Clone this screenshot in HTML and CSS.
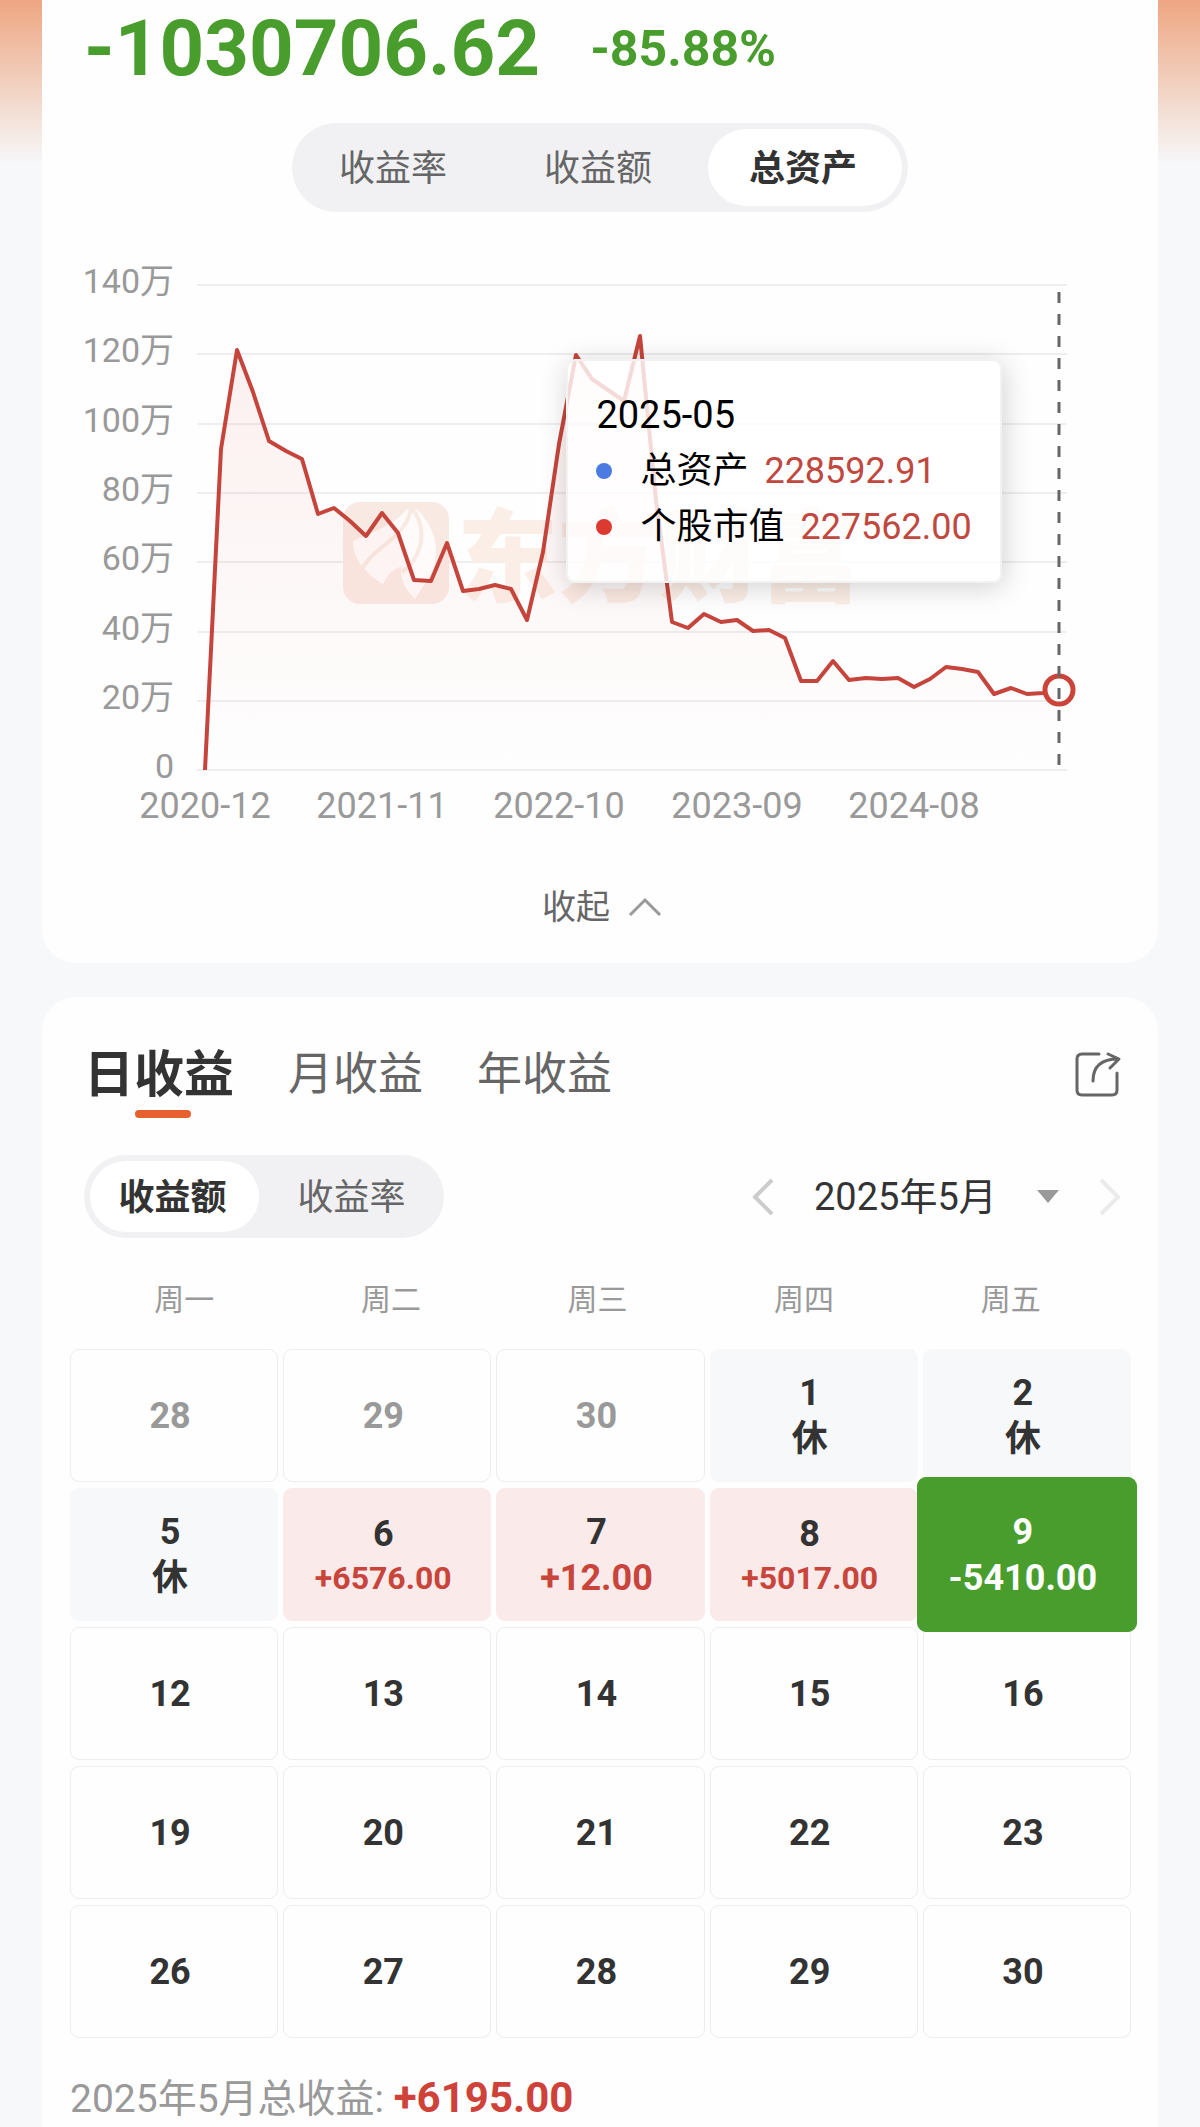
FILE: index.html
```html
<!DOCTYPE html>
<html lang="zh-CN">
  <head>
    <meta charset="UTF-8" />
    <meta name="viewport" content="width=device-width, initial-scale=1.0" />
    <title>收益日历</title>
    <link rel="stylesheet" href="styles.css" />
  </head>
  <body>
    <main>
      <section class="card assets">
        <div class="total">
          <span class="amount">-1030706.62</span>
          <span class="percent">-85.88%</span>
        </div>

        <div class="switch switch-large">
          <button>收益率</button>
          <button>收益额</button>
          <button class="active">总资产</button>
        </div>

        <div class="chart">
          <svg viewBox="0 0 1116 590" role="img" aria-label="总资产">
            <defs>
              <linearGradient id="area" x1="0" y1="0" x2="0" y2="1">
                <stop offset="0" stop-color="#e0463c" stop-opacity="0.08" />
                <stop offset="1" stop-color="#e0463c" stop-opacity="0" />
              </linearGradient>
            </defs>

            <path class="grid" d="M155 35H1025M155 104H1025M155 174H1025M155 243H1025M155 312H1025M155 382H1025M155 451H1025M155 520H1025" />

            <!-- watermark -->
            <g class="watermark">
              <rect x="301" y="252" width="106" height="102" rx="17" />
              <path class="feather" d="M311 291C325 284 352 276 365 259L371 264L375 259C390 275 397 292 393 311C390 327 383 332 373 349C365 340 358 333 359 317C349 319 344 328 341 334C326 325 310 310 311 291Z" />
              <path class="vein" d="M368 261C364 289 325 299 317 326M373 262C387 286 376 311 360 322" />
              <text x="415" y="344">东方财富</text>
            </g>

            <polygon fill="url(#area)" points="163,520 179,199 195,100 211,142 227,191 244,201 260,209 276,264 292,258 308,271 324,286 340,263 356,283 372,330 389,331 405,293 421,341 437,339 453,335 469,339 485,370 501,302 517,194 534,105 550,129 566,140 582,151 598,86 614,250 630,372 646,378 662,364 679,372 695,370 711,381 727,380 743,388 759,431 775,431 791,411 807,430 824,428 840,429 856,428 872,437 888,429 904,417 920,419 936,422 952,444 969,438 985,444 1001,443 1017,440 1017,520" />
            <polyline class="line" points="163,520 179,199 195,100 211,142 227,191 244,201 260,209 276,264 292,258 308,271 324,286 340,263 356,283 372,330 389,331 405,293 421,341 437,339 453,335 469,339 485,370 501,302 517,194 534,105 550,129 566,140 582,151 598,86 614,250 630,372 646,378 662,364 679,372 695,370 711,381 727,380 743,388 759,431 775,431 791,411 807,430 824,428 840,429 856,428 872,437 888,429 904,417 920,419 936,422 952,444 969,438 985,444 1001,443 1017,440" />
            <circle class="point" cx="1017" cy="440" r="14" />
            <path class="pointer" d="M1017 42V520" />

            <g class="axis axis-y">
              <text x="132" y="43">140万</text>
              <text x="132" y="112">120万</text>
              <text x="132" y="182">100万</text>
              <text x="132" y="251">80万</text>
              <text x="132" y="320">60万</text>
              <text x="132" y="390">40万</text>
              <text x="132" y="459">20万</text>
              <text x="132" y="528">0</text>
            </g>
            <g class="axis axis-x">
              <text x="163" y="568">2020-12</text>
              <text x="340" y="568">2021-11</text>
              <text x="517" y="568">2022-10</text>
              <text x="695" y="568">2023-09</text>
              <text x="872" y="568">2024-08</text>
            </g>
          </svg>

          <div class="tooltip">
            <p class="tooltip-date">2025-05</p>
            <p><i class="dot blue"></i>总资产<span>228592.91</span></p>
            <p><i class="dot red"></i>个股市值<span>227562.00</span></p>
          </div>
        </div>

        <button class="collapse">
          收起
          <svg width="34" height="20" viewBox="0 0 34 20"><path d="M2 18L17 3L32 18" /></svg>
        </button>
      </section>

      <section class="card calendar">
        <header class="tabs">
          <button class="active">日收益</button>
          <button>月收益</button>
          <button>年收益</button>
          <button class="share" aria-label="分享">
            <svg width="46" height="46" viewBox="0 0 46 46">
              <path d="M24 2H7Q2 2 2 7V38Q2 43 7 43H37Q42 43 42 38V21" />
              <path d="M18 29C18 15 26 7 43 7M33 2L44 7L35 16" />
            </svg>
          </button>
        </header>

        <div class="toolbar">
          <div class="switch">
            <button class="active">收益额</button>
            <button>收益率</button>
          </div>
          <div class="month">
            <button aria-label="上个月">
              <svg width="22" height="38" viewBox="0 0 22 38"><path d="M20 2L3 19L20 36" /></svg>
            </button>
            <label class="month-select">
              <select aria-label="月份">
                <option>2025年5月</option>
              </select>
              <svg width="22" height="13" viewBox="0 0 22 13"><path d="M0 0H22L11 13Z" /></svg>
            </label>
            <button aria-label="下个月" class="disabled" disabled>
              <svg width="22" height="38" viewBox="0 0 22 38"><path d="M2 2L19 19L2 36" /></svg>
            </button>
          </div>
        </div>

        <table>
          <thead>
            <tr>
              <th>周一</th>
              <th>周二</th>
              <th>周三</th>
              <th>周四</th>
              <th>周五</th>
            </tr>
          </thead>
          <tbody>
            <tr>
              <td class="other">28</td>
              <td class="other">29</td>
              <td class="other">30</td>
              <td class="rest">1<span>休</span></td>
              <td class="rest">2<span>休</span></td>
            </tr>
            <tr>
              <td class="rest">5<span>休</span></td>
              <td class="up">6<span class="small">+6576.00</span></td>
              <td class="up">7<span>+12.00</span></td>
              <td class="up">8<span class="small">+5017.00</span></td>
              <td class="selected">9<span>-5410.00</span></td>
            </tr>
            <tr>
              <td>12</td>
              <td>13</td>
              <td>14</td>
              <td>15</td>
              <td>16</td>
            </tr>
            <tr>
              <td>19</td>
              <td>20</td>
              <td>21</td>
              <td>22</td>
              <td>23</td>
            </tr>
            <tr>
              <td>26</td>
              <td>27</td>
              <td>28</td>
              <td>29</td>
              <td>30</td>
            </tr>
          </tbody>
        </table>

        <p class="summary">2025年5月总收益: <strong>+6195.00</strong></p>
      </section>
    </main>
  </body>
</html>
```
FILE: styles.css
```css
* {
  box-sizing: border-box;
}

body {
  margin: 0;
  background: #f6f8fa linear-gradient(#eea682, #f6f8fa) no-repeat top / 100% 164px;
  font-family: Roboto, "Noto Sans CJK SC", sans-serif;
  font-size: 36px;
  color: #333;
}

main {
  display: flex;
  flex-direction: column;
  gap: 34px;
  padding: 0 42px;
}

p {
  margin: 0;
}

button,
select {
  border: none;
  padding: 0;
  background: none;
  font: inherit;
  color: inherit;
  cursor: pointer;
}

svg {
  display: block;
  fill: none;
}

.card {
  background-color: #fefefe;
}

/* total assets */

.assets {
  display: flex;
  flex-direction: column;
  align-items: center;
  padding-bottom: 31px;
  border-radius: 0 0 34px 34px;
}

.total {
  display: flex;
  align-items: center;
  align-self: stretch;
  gap: 50px;
  padding: 0 42px;
  line-height: 98px;
  font-weight: 700;
  color: #489d2d;
}

.amount {
  font-size: 78px;
}

.percent {
  font-size: 50px;
}

.switch {
  display: flex;
  gap: 10px;
  padding: 6px;
  border-radius: 45px;
  background-color: #f1f1f4;
}

.switch button {
  width: 169px;
  padding: 3px 4px 0 0;
  border-radius: 40px;
  line-height: 68px;
  color: #666;
}

.switch .active {
  background-color: #fff;
  font-weight: 700;
  color: #333;
}

.switch-large {
  gap: 11px;
  margin-top: 25px;
}

.switch-large button {
  width: 194px;
  line-height: 74px;
}

.chart {
  position: relative;
  width: 100%;
  margin-top: 38px;
}

.grid {
  stroke: #eceef0;
  stroke-width: 2;
}

.watermark {
  fill: #f9e9e3;
}

.watermark text {
  font-size: 101px;
  font-weight: 900;
  fill: #fbeee6;
}

.feather {
  fill: #fefbfa;
}

.vein {
  stroke: #f9e9e3;
  stroke-width: 4;
  fill: none;
}

.line {
  stroke: #c5453c;
  stroke-width: 4;
  stroke-linejoin: round;
}

.point {
  fill: #fff;
  stroke: #cc433a;
  stroke-width: 5;
}

.pointer {
  stroke: #666;
  stroke-width: 3;
  stroke-dasharray: 11 11;
}

.axis {
  font-size: 34px;
  fill: #999;
}

.axis-y {
  text-anchor: end;
}

.axis-x {
  font-size: 36px;
  text-anchor: middle;
}

.tooltip {
  position: absolute;
  top: 109px;
  right: 14%;
  padding: 26px 28px;
  border: 2px solid #f3f2f2;
  border-radius: 9px;
  background-color: rgba(255, 255, 255, 0.8);
  box-shadow: 2px 4px 28px rgba(0, 0, 0, 0.18);
  line-height: 56px;
  color: #000;
}

.tooltip p {
  display: flex;
  align-items: center;
}

.tooltip .tooltip-date {
  font-size: 38px;
}

.tooltip span {
  margin-left: 16px;
  color: #c0483f;
}

.dot {
  width: 16px;
  height: 16px;
  margin-right: 28px;
  border-radius: 50%;
}

.blue {
  background-color: #4a7be2;
}

.red {
  background-color: #dc3a31;
}

.collapse {
  display: flex;
  align-items: center;
  gap: 18px;
  margin-top: 42px;
  padding-left: 4px;
  font-size: 34px;
  line-height: 50px;
  color: #666;
}

.collapse svg {
  stroke: #999;
  stroke-width: 3;
}

/* profit calendar */

.calendar {
  padding: 43px 27px 0 28px;
  border-radius: 34px 34px 0 0;
}

.tabs {
  display: flex;
  align-items: center;
  gap: 54px;
  padding: 0 10px 0 14px;
}

.tabs button {
  font-size: 45px;
  line-height: 70px;
  color: #666;
}

.tabs .active {
  position: relative;
  font-size: 50px;
  font-weight: 700;
  color: #333;
}

.tabs .active::after {
  content: "";
  position: absolute;
  bottom: -8px;
  left: calc(50% - 24px);
  width: 56px;
  height: 8px;
  border-radius: 4px;
  background-color: #e6612f;
}

.tabs .share {
  margin-left: auto;
}

.share svg {
  stroke: #666;
  stroke-width: 3;
  stroke-linecap: round;
  stroke-linejoin: round;
}

.toolbar {
  display: flex;
  justify-content: space-between;
  align-items: center;
  margin-top: 45px;
  padding: 0 10px 0 14px;
}

.month {
  display: flex;
  align-items: center;
  gap: 40px;
}

.month button svg {
  stroke: #ccc;
  stroke-width: 4;
}

.month .disabled svg {
  stroke: #ebebeb;
}

.month-select {
  display: flex;
  align-items: center;
  gap: 40px;
}

.month-select select {
  appearance: none;
  font-size: 38px;
  line-height: 56px;
}

.month-select svg {
  fill: #999;
}

table {
  display: block;
  margin-top: 39px;
}

thead,
tbody {
  display: grid;
  gap: 6px;
}

tr {
  display: grid;
  grid-template-columns: repeat(5, 1fr);
  gap: 5px;
}

thead tr {
  gap: 0;
  padding: 0 17px 0 11px;
}

th {
  padding: 0;
  font-size: 30px;
  font-weight: 400;
  line-height: 46px;
  color: #999;
}

tbody {
  margin-top: 26px;
}

td {
  display: flex;
  flex-direction: column;
  align-items: center;
  justify-content: center;
  height: 133px;
  padding: 0 8px 0 0;
  border: 1px solid #ededed;
  border-radius: 9px;
  font-weight: 700;
  line-height: 46px;
}

.other {
  color: #999;
}

.rest {
  border-color: #f6f8fa;
  background-color: #f6f8fa;
}

.up {
  border-color: #faeaea;
  background-color: #faeaea;
}

.up span {
  color: #c9443b;
}

.small {
  font-size: 32px;
  line-height: 42px;
}

.selected {
  z-index: 1;
  height: 155px;
  margin: -11px -6px;
  border-color: #489d2d;
  background-color: #489d2d;
  color: #fff;
}

.summary {
  margin-top: 32px;
  font-size: 39px;
  line-height: 56px;
  color: #999;
}

.summary strong {
  font-size: 42px;
  color: #cf4239;
}
```
